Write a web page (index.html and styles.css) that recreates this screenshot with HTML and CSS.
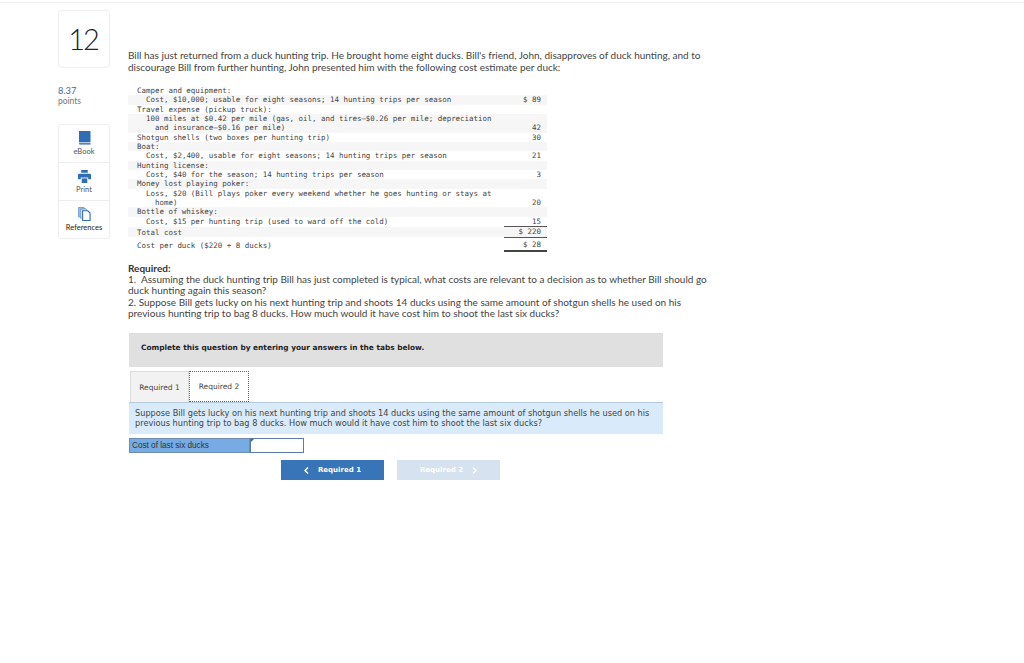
FILE: index.html
```html
<!DOCTYPE html>
<html lang="en">
<head>
  <meta charset="UTF-8">
  <title>Question 12</title>
  <link rel="stylesheet" href="styles.css">
</head>
<body>
  <div class="page">
    <aside class="side">
      <div class="qnum">12</div>
      <div class="score">8.37</div>
      <div class="score-label">points</div>
      <div class="tools">
        <div class="tool">
          <svg width="13" height="14" viewBox="0 0 13 14"><path fill="#2f6db5" d="M1 0h11.500v11H2.500C1.700 11 1 11.400 1 12z"/><path fill="#b7cde6" d="M1 12c0-.6.7-1 1.500-1h10v1.200H2.500z"/><path fill="#2f5f9a" d="M1 12.200h11.500V13.500H2.200C1.500 13.500 1 13 1 12.200z"/></svg>
          <span>eBook</span>
        </div>
        <div class="tool">
          <svg width="13" height="13" viewBox="0 0 14 14"><path fill="#2f6db5" d="M3.500 0h7v3h-7zM1 4h12c.6 0 1 .4 1 1v5h-3V8H3v2H0V5c0-.6.4-1 1-1z"/><path fill="#2f6db5" d="M4 9h6v5H4z"/></svg>
          <span>Print</span>
        </div>
        <div class="tool">
          <svg width="13" height="14" viewBox="0 0 14 15"><path fill="#a9c3e2" stroke="#5f8fc7" stroke-width=".8" d="M.5.500h6l1 1v9h-7z"/><path fill="#cfdef0" stroke="#5f8fc7" stroke-width=".8" d="M2.500 2h6l1 1v9h-7z"/><path fill="#fff" stroke="#2f6db5" stroke-width="1.200" d="M5 4h5.500l2.500 2.500v8H5z"/></svg>
          <span class="tool-dark">References</span>
        </div>
      </div>
    </aside>

    <main class="content">
      <p class="intro">Bill has just returned from a duck hunting trip. He brought home eight ducks. Bill's friend, John, disapproves of duck hunting, and to discourage Bill from further hunting, John presented him with the following cost estimate per duck:</p>

      <table class="costs">
        <tr><td class="d">Camper and equipment:</td><td class="a"></td></tr>
        <tr class="alt"><td class="d i1">Cost, $10,000; usable for eight seasons; 14 hunting trips per season</td><td class="a">$ 89</td></tr>
        <tr><td class="d">Travel expense (pickup truck):</td><td class="a"></td></tr>
        <tr class="alt"><td class="d hang">100 miles at $0.42 per mile (gas, oil, and tires–$0.26 per mile; depreciation and insurance–$0.16 per mile)</td><td class="a">42</td></tr>
        <tr><td class="d">Shotgun shells (two boxes per hunting trip)</td><td class="a">30</td></tr>
        <tr class="alt"><td class="d">Boat:</td><td class="a"></td></tr>
        <tr><td class="d i1">Cost, $2,400, usable for eight seasons; 14 hunting trips per season</td><td class="a">21</td></tr>
        <tr class="alt"><td class="d">Hunting license:</td><td class="a"></td></tr>
        <tr><td class="d i1">Cost, $40 for the season; 14 hunting trips per season</td><td class="a">3</td></tr>
        <tr class="alt"><td class="d">Money lost playing poker:</td><td class="a"></td></tr>
        <tr><td class="d hang">Loss, $20 (Bill plays poker every weekend whether he goes hunting or stays at home)</td><td class="a">20</td></tr>
        <tr class="alt"><td class="d">Bottle of whiskey:</td><td class="a"></td></tr>
        <tr><td class="d i1">Cost, $15 per hunting trip (used to ward off the cold)</td><td class="a under">15</td></tr>
        <tr class="alt"><td class="d">Total cost</td><td class="a under">$ 220</td></tr>
        <tr class="last"><td class="d">Cost per duck ($220 ÷ 8 ducks)</td><td class="a double">$ 28</td></tr>
      </table>

      <div class="required">
        <strong>Required:</strong><br>
        1.&nbsp; Assuming the duck hunting trip Bill has just completed is typical, what costs are relevant to a decision as to whether Bill should go duck hunting again this season?<br>
        2. Suppose Bill gets lucky on his next hunting trip and shoots 14 ducks using the same amount of shotgun shells he used on his previous hunting trip to bag 8 ducks. How much would it have cost him to shoot the last six ducks?
      </div>

      <div class="answer">
        <div class="banner">Complete this question by entering your answers in the tabs below.</div>
        <div class="tabs">
          <div class="tab">Required 1</div>
          <div class="tab tab-on">Required 2</div>
        </div>
        <div class="info">Suppose Bill gets lucky on his next hunting trip and shoots 14 ducks using the same amount of shotgun shells he used on his previous hunting trip to bag 8 ducks. How much would it have cost him to shoot the last six ducks?</div>
        <div class="entry">
          <div class="entry-label">Cost of last six ducks</div>
          <div class="entry-box"></div>
        </div>
        <div class="nav">
          <div class="btn"><svg class="chev" width="5" height="7" viewBox="0 0 5 7"><path fill="none" stroke="#fff" stroke-width="1.500" d="M4 .5 1 3.500 4 6.500"/></svg>Required 1</div>
          <div class="btn btn-off">Required 2<svg class="chev chev-r" width="5" height="7" viewBox="0 0 5 7"><path fill="none" stroke="#fff" stroke-width="1.500" d="M1 .5 4 3.500 1 6.500"/></svg></div>
        </div>
      </div>
    </main>
  </div>
</body>
</html>
```

FILE: styles.css
```css
html, body { margin:0; padding:0; background:#fff; }
body { font-family:Lato, "Liberation Sans", sans-serif; color:#444; }
.page { display:flex; height:653px; margin-top:2px; border-top:1px solid #eee; padding-top:7px; padding-left:58px; }

/* left column */
.side { width:52px; flex:none; }
.qnum { box-sizing:border-box; height:58px; border:1px solid #eee; border-radius:4px; display:flex; align-items:center; justify-content:center; font-size:29px; font-weight:300; letter-spacing:-2px; color:#222; padding:0 2px 1px 0; }
.score { margin-top:18px; font-size:9.300px; line-height:10px; color:#3a6ea5; }
.score-label { font-size:8.500px; line-height:10px; color:#777; }
.tools { margin-top:18px; border:1px solid #eee; border-radius:3px; box-sizing:border-box; height:115px; display:flex; flex-direction:column; }
.tool { flex:1; display:flex; flex-direction:column; align-items:center; justify-content:center; gap:2px; font-size:7.500px; line-height:9px; color:#555; }
.tool + .tool { border-top:1px solid #eee; }
.tool-dark { color:#222; }

/* question */
.content { margin-left:18px; width:580px; padding-top:40px; }
.intro { margin:0; font-size:10px; line-height:11.500px; color:#444; }
.costs { margin-top:13px; width:419px; border-collapse:collapse; font-family:"DejaVu Sans Mono", monospace; font-size:7.460px; line-height:9.350px; color:#444; }
.costs td { padding:0; vertical-align:bottom; }
.alt td { background:#f6f6f6; }
.costs .d { padding-left:9px; }
.costs .i1 { padding-left:18px; }
.costs .hang { padding-left:27px; text-indent:-9px; }
.costs .a { width:43px; text-align:right; padding-right:6px; box-sizing:border-box; white-space:nowrap; }
.under { border-bottom:1px solid #555; }
.costs .last td { padding-top:2px; padding-bottom:1px; }
.double { border-bottom:2px solid #444; }

.required { margin-top:11px; font-size:10px; line-height:11.300px; color:#444; width:580px; }
.required strong { color:#333; }

/* answer block */
.answer { margin-top:14px; width:534px; margin-left:1px; }
.banner { box-sizing:border-box; height:34px; background:#e0e0e0; padding:0 0 6px 12px; display:flex; align-items:center; font-family:"DejaVu Sans", sans-serif; font-weight:bold; font-size:7.400px; color:#222; }
.tabs { display:flex; margin-top:4px; padding-left:1px; height:31px; }
.tab { box-sizing:border-box; width:59px; background:#f2f2f2; border:1px solid #ddd; border-bottom:none; display:flex; align-items:center; justify-content:center; font-family:"DejaVu Sans", sans-serif; font-size:7.500px; color:#444; }
.tab-on { width:60px; background:#fff; border:1px dotted #2f6db5; }
.info { box-sizing:border-box; height:32px; background:#d9ebfa; border-top:1px solid #b5cbdc; padding:5px 6px 0; font-family:"DejaVu Sans", sans-serif; font-size:8.200px; line-height:10px; color:#444; }
.entry { display:flex; margin-top:4px; height:15px; }
.entry-label { box-sizing:border-box; width:121px; background:#76abe3; border:1px solid #6d8caf; display:flex; align-items:center; padding-left:2px; font-family:"Liberation Sans", sans-serif; font-size:8.200px; color:#333; }
.entry-box { box-sizing:border-box; width:54px; background:#fff; border:1px solid #5b7ca5; position:relative; }
.entry-box::before { content:""; position:absolute; top:0; left:0; border-top:3px solid #2f6db5; border-right:3px solid transparent; }
.nav { display:flex; gap:13px; margin-top:7px; margin-left:152px; }
.btn { box-sizing:border-box; width:103px; height:20px; background:#3875b8; color:#fff; display:flex; align-items:center; justify-content:center; font-family:"DejaVu Sans", sans-serif; font-weight:bold; font-size:7px; }
.btn-off { background:#d6e2ef; }
.chev { margin-right:9px; }
.chev-r { margin-right:0; margin-left:9px; }
```
